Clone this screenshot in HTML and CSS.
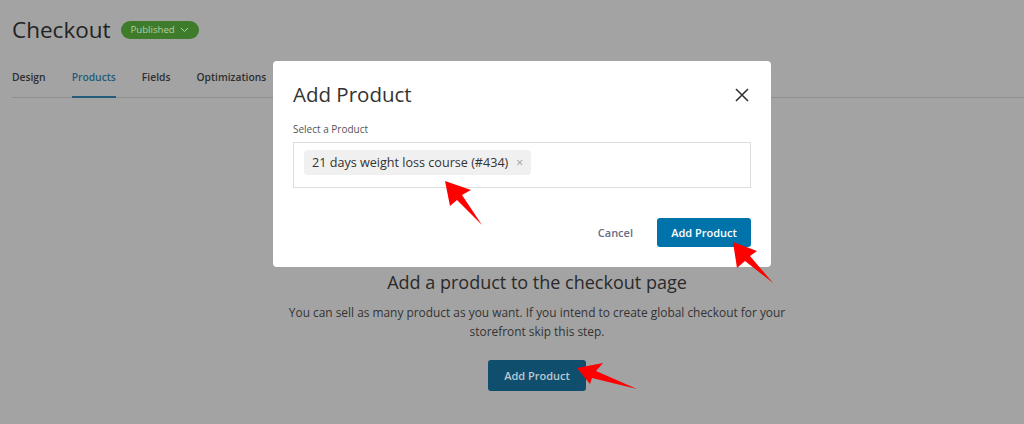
FILE: index.html
```html
<!DOCTYPE html>
<html>
<head>
<meta charset="utf-8">
<link rel="stylesheet" href="styles.css">
</head>
<body>
<div class="page">
  <header class="head">
    <h1 class="title">Checkout</h1>
    <span class="badge">Published <svg width="9" height="6" viewBox="0 0 9 6"><path d="M1 1l3.5 3.5L8 1" fill="none" stroke="currentColor" stroke-width="1"/></svg></span>
  </header>
  <nav class="tabs">
    <span class="tab">Design</span>
    <span class="tab active">Products</span>
    <span class="tab">Fields</span>
    <span class="tab">Optimizations</span>
  </nav>
  <main class="empty">
    <h2 class="empty-title">Add a product to the checkout page</h2>
    <p class="empty-text">You can sell as many product as you want. If you intend to create global checkout for your storefront skip this step.</p>
    <button class="btn dim">Add Product</button>
  </main>
</div>

<div class="modal">
  <div class="modal-head">
    <h3 class="modal-title">Add Product</h3>
    <svg class="close" width="14" height="14" viewBox="0 0 14 14"><path d="M1 1l12 12M13 1L1 13" stroke="#333" stroke-width="1.6"/></svg>
  </div>
  <label class="label">Select a Product</label>
  <div class="select">
    <span class="chip">21 days weight loss course (#434) <span class="chip-x">×</span></span>
  </div>
  <div class="modal-foot">
    <span class="cancel">Cancel</span>
    <button class="btn primary">Add Product</button>
  </div>
</div>

<svg class="arrows" width="1024" height="424" viewBox="0 0 1024 424">
  <polygon points="445,181 471,190 462,195 482,225 457,200 450,206" fill="#ff0000"/>
  <polygon points="733,242 757,251 750,256 773,283 745,261 737,268" fill="#ff0000"/>
  <polygon points="577,368 603,363 596,371 637,389 592,378 590,384" fill="#ff0000"/>
</svg>
</body>
</html>
```
FILE: styles.css
```css
* { box-sizing: border-box; }
html, body { margin: 0; padding: 0; }
body {
  width: 1024px;
  height: 424px;
  overflow: hidden;
  background: #a3a3a3;
  font-family: "Open Sans", "Noto Sans", sans-serif;
  color: #2b2b2b;
  position: relative;
}
.page { padding: 0 0 0 12px; }
.head {
  display: flex;
  align-items: center;
  gap: 10px;
  height: 58px;
  padding-top: 1px;
}
.title {
  margin: 0;
  font-size: 22.5px;
  font-weight: 500;
  color: #222;
}
.badge {
  display: inline-flex;
  align-items: center;
  gap: 5px;
  height: 18px;
  padding: 0 10px 0 10px;
  border-radius: 9px;
  background: #3e7c2c;
  color: #b3cfa6;
  font-size: 9.6px;
}
.tabs {
  display: flex;
  gap: 26px;
  height: 40px;
  border-bottom: 1px solid #8f8f8f;
  align-items: stretch;
}
.tab {
  display: flex;
  align-items: center;
  font-size: 10.3px;
  font-weight: 600;
  color: #2e2e2e;
  border-bottom: 2px solid transparent;
  margin-bottom: -1px;
}
.tab.active {
  color: #235b78;
  border-bottom-color: #235b78;
}
.empty {
  display: flex;
  flex-direction: column;
  align-items: center;
  padding-left: 38px;
  padding-top: 172px;
}
.empty-title {
  margin: 0;
  font-size: 18px;
  font-weight: 500;
  color: #2a2a2a;
}
.empty-text {
  margin: 9px 0 0;
  width: 530px;
  text-align: center;
  font-size: 11.9px;
  line-height: 19px;
  color: #333;
}
.btn {
  border: 0;
  font-family: inherit;
  font-size: 11px;
  font-weight: 600;
  border-radius: 3px;
  cursor: pointer;
}
.btn.dim {
  margin-top: 19px;
  width: 98px;
  height: 31px;
  background: #0f4e6c;
  color: #b9c9d3;
}
.modal {
  position: absolute;
  left: 273px;
  top: 61px;
  width: 498px;
  height: 206px;
  background: #fff;
  border-radius: 4px;
  padding: 18px 20px 0 20px;
  display: flex;
  flex-direction: column;
}
.modal-head {
  display: flex;
  justify-content: space-between;
  align-items: center;
  height: 30px;
}
.modal-title {
  margin: 0;
  font-size: 20.5px;
  font-weight: 500;
  color: #333;
}
.close { margin-right: 2px; margin-top: 1px; }
.label {
  margin-top: 13px;
  font-size: 10px;
  color: #555;
}
.select {
  margin-top: 6px;
  height: 46px;
  border: 1px solid #ddd;
  padding: 7px 10px;
  display: flex;
  align-items: flex-start;
}
.chip {
  display: inline-flex;
  align-items: center;
  height: 25px;
  padding: 0 8px;
  background: #f0f0f0;
  border-radius: 4px;
  font-size: 12.6px;
  color: #333;
}
.chip-x {
  margin-left: 8px;
  font-size: 12px;
  color: #999;
}
.modal-foot {
  margin-top: 30px;
  display: flex;
  justify-content: flex-end;
  align-items: center;
  gap: 24px;
}
.cancel {
  font-size: 11px;
  font-weight: 600;
  color: #6c6c84;
}
.btn.primary {
  width: 94px;
  height: 29px;
  background: #0073aa;
  color: #fff;
}
.arrows {
  position: absolute;
  left: 0;
  top: 0;
  pointer-events: none;
}
```
